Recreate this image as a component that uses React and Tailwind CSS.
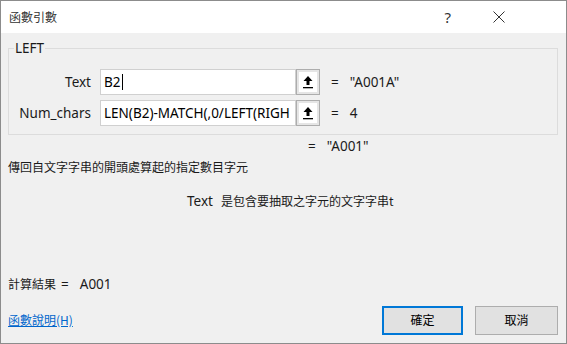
import React from "react";

const latin = { fontFamily: '"Noto Sans", "Noto Sans CJK TC", sans-serif' };
const cjk = { fontFamily: '"Noto Sans CJK TC", sans-serif' };

function RefButton() {
    return (
        <div className="w-[24px] h-[26px] border border-[#adadad] bg-[#e5e5e5] p-[2px]">
            <div className="w-full h-full bg-white flex items-center justify-center">
                <svg width="12" height="14" viewBox="0 0 12 14">
                    <path d="M6 1 L10.5 6 L7.5 6 L7.5 10 L4.5 10 L4.5 6 L1.5 6 Z" fill="#000" />
                    <rect x="1" y="12" width="10" height="1.3" fill="#000" />
                </svg>
            </div>
        </div>
    );
}

function ArgRow({ label, value, result, caret }) {
    return (
        <div className="flex items-center h-[26px]">
            <div className="w-[82px] text-right text-[13.5px] text-[#1a1a1a]">{label}</div>
            <div className="ml-[9px] w-[196px] h-[26px] border border-[#d0d0d0] bg-white flex items-center pl-[3px] overflow-hidden whitespace-nowrap text-[13.5px] text-black">
                <span>{value}</span>
                {caret && <span className="inline-block w-[1px] h-[16px] bg-black ml-[1px]" />}
            </div>
            <RefButton />
            <div className="ml-[11px] text-[13.5px] text-[#1a1a1a]">=</div>
            <div className="ml-[11px] text-[13.5px] text-[#1a1a1a]">{result}</div>
        </div>
    );
}

function App() {
    return (
        <div className="w-[567px] h-[344px] border border-[#8c8c8c] bg-[#f0f0f0] flex flex-col overflow-hidden" style={latin}>
            {/* title bar */}
            <div className="h-[32px] bg-white flex items-center shrink-0">
                <span className="ml-[8px] text-[12px] text-[#333]" style={cjk}>函數引數</span>
                <span className="ml-auto text-[15px] text-[#333] mr-[42px]">?</span>
                <svg width="12" height="12" viewBox="0 0 12 12" className="mr-[61px]">
                    <path d="M0.5 0.5 L11.5 11.5 M11.5 0.5 L0.5 11.5" stroke="#333" strokeWidth="1" />
                </svg>
            </div>

            <div className="flex flex-col px-[7px] pr-[8px]">
                <fieldset className="mt-[7px] border border-[#dcdcdc] pb-[8px]">
                    <legend className="ml-[5px] px-[1px] text-[13.5px] leading-[17px] text-[#1a1a1a]">LEFT</legend>
                    <div className="flex flex-col gap-[5px] mt-[12px]">
                        <ArgRow label="Text" value="B2" result={'"A001A"'} caret />
                        <ArgRow label="Num_chars" value="LEN(B2)-MATCH(,0/LEFT(RIGH" result="4" />
                    </div>
                </fieldset>

                <div className="flex items-center h-[20px] mt-[1px] text-[13.5px] text-[#1a1a1a]">
                    <span className="ml-[300px]">=</span>
                    <span className="ml-[11px]">"A001"</span>
                </div>

                <div className="mt-[3px] text-[12px] leading-[16px] text-[#1a1a1a]" style={cjk}>
                    傳回自文字字串的開頭處算起的指定數目字元
                </div>

                <div className="mt-[16px] ml-[179px] flex items-center text-[#1a1a1a]">
                    <span className="text-[13.5px]">Text</span>
                    <span className="ml-[8px] text-[12px]" style={cjk}>是包含要抽取之字元的文字字串t</span>
                </div>

                <div className="mt-[63px] flex items-center text-[#1a1a1a]">
                    <span className="text-[12px]" style={cjk}>計算結果</span>
                    <span className="ml-[5px] text-[13.5px]">=</span>
                    <span className="ml-[11px] text-[13.5px]">A001</span>
                </div>

                <div className="mt-[11px] flex items-center">
                    <a className="text-[12px] text-[#0066cc] underline" style={cjk}>函數說明(H)</a>
                    <button className="ml-auto w-[81px] h-[29px] border-2 border-[#0078d7] bg-[#e1e1e1] text-[12px] text-black" style={cjk}>確定</button>
                    <button className="ml-[12px] w-[83px] h-[29px] border border-[#adadad] bg-[#e1e1e1] text-[12px] text-black" style={cjk}>取消</button>
                </div>
            </div>
        </div>
    );
}

export default App;
